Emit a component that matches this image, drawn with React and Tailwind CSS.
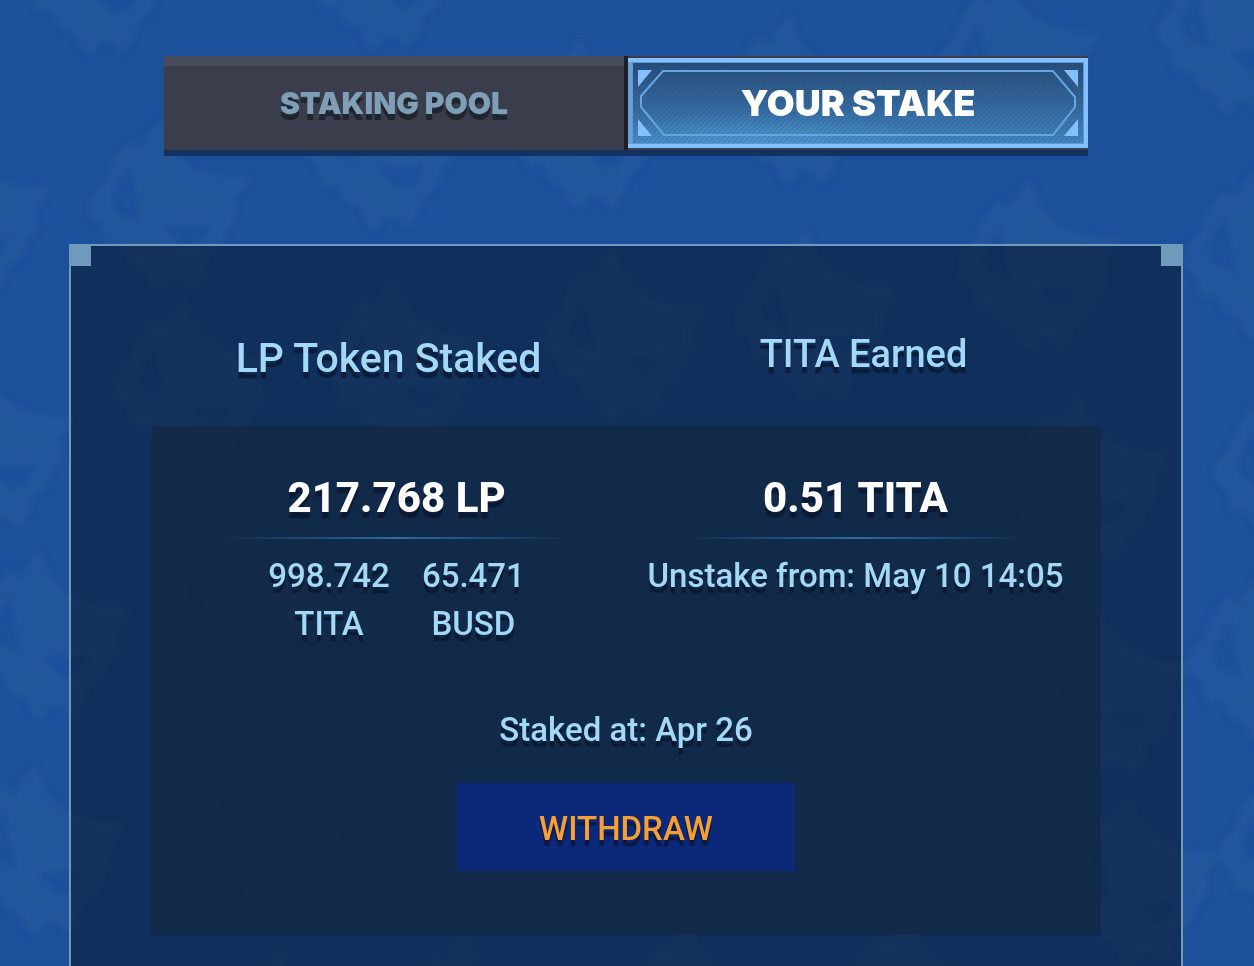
import { useState } from "react";

const TEXT_SHADOW = "[text-shadow:0_6px_1px_rgba(8,20,42,0.7)]";

// Centres of the mascot heads on the wallpaper
const heads = [
  [100, -30], [385, -35], [590, 125], [800, 100], [1020, 60], [1238, 30],
  [-30, 215], [170, 205], [385, 145], [1040, 265], [1265, 255],
  [195, 385], [405, 365], [625, 335], [817, 315], [1295, 470],
  [-5, 445], [50, 635], [240, 600], [1090, 480], [1270, 660],
  [45, 850], [270, 820], [1110, 690], [1140, 880], [1300, 850],
  [290, 1033], [475, 1020], [700, 1010], [920, 1000],
];

function Wallpaper() {
  return (
    <svg
      className="absolute inset-0 h-full w-full"
      viewBox="0 0 1254 966"
      preserveAspectRatio="xMidYMin slice"
      aria-hidden="true"
    >
      <defs>
        <g id="head">
          <path
            d="M-10 -86 L-2 -62 L10 -46 L30 -34 L56 -28 L80 -28 L74 -14 L66 -8 L66 16 L58 24 L52 42 L38 52 L34 68 L22 84 L12 72 L0 70 L-8 86 L-18 80 L-26 62 L-40 58 L-48 40 L-64 42 L-68 22 L-82 8 L-80 -6 L-66 -22 L-56 -46 L-40 -66 L-32 -54 L-22 -70 Z M-40 -42 L-58 -10 L-54 8 L-38 14 L-28 22 L-34 -8 Z M-8 22 L42 20 L28 42 L14 44 Z"
            fillRule="evenodd"
          />
        </g>
        <filter id="soft">
          <feGaussianBlur stdDeviation="3" />
        </filter>
      </defs>
      <g fill="#23579b" filter="url(#soft)">
        {heads.map(([x, y]) => (
          <use key={`${x}-${y}`} href="#head" x={x} y={y} />
        ))}
      </g>
    </svg>
  );
}

function TabFrame() {
  return (
    <svg
      className="absolute inset-0 h-full w-full"
      viewBox="0 0 460 90"
      preserveAspectRatio="none"
      aria-hidden="true"
    >
      <defs>
        <linearGradient id="tabFill" x1="0" y1="0" x2="0" y2="1">
          <stop offset="0" stopColor="#264a74" />
          <stop offset="0.5" stopColor="#33659a" />
          <stop offset="1" stopColor="#4589c4" />
        </linearGradient>
        <radialGradient id="tabGlow" cx="0.28" cy="1" r="0.4">
          <stop offset="0" stopColor="#55a8dc" stopOpacity="0.6" />
          <stop offset="1" stopColor="#55a8dc" stopOpacity="0" />
        </radialGradient>
        <pattern id="tabHatch" width="5" height="5" patternUnits="userSpaceOnUse">
          <path d="M0 5L5 0" stroke="#1c4674" strokeOpacity="0.3" />
        </pattern>
      </defs>
      <rect width="460" height="90" fill="url(#tabFill)" />
      <rect width="460" height="90" fill="url(#tabGlow)" />
      <rect width="460" height="90" fill="url(#tabHatch)" />
      <rect x="4" y="4" width="452" height="82" fill="none" stroke="#5f98d6" strokeWidth="2" />
      <rect x="2" y="2" width="456" height="86" fill="none" stroke="#84bfff" strokeWidth="4" />
      <path d="M2 86V4" stroke="#6b9fd4" strokeWidth="4" />
      <path
        d="M35 13H425L447 39V49L425 77H36L13 49V38Z"
        fill="none"
        stroke="#66a4e4"
        strokeWidth="2"
      />
      <path
        d="M10 12H24L10 29ZM10 61L24 78H10ZM450 12H436L450 29ZM450 61L436 78H450Z"
        fill="#84bfff"
      />
    </svg>
  );
}

function Tabs({ active, onChange }) {
  return (
    <div
      role="tablist"
      className="mx-auto grid h-[94px] w-full max-w-[924px] grid-cols-[464fr_460fr] bg-[#393d4c] font-['Inter',sans-serif] shadow-[0_6px_0_#14325f]"
    >
      <button
        type="button"
        role="tab"
        aria-selected={active === "pool"}
        onClick={() => onChange("pool")}
        className="border-r-4 border-[#1c1e2a] text-[30px] font-black text-[#7f9fb7] shadow-[inset_0_10px_0_#484c5a] [text-shadow:0_6px_0_#20242f]"
      >
        STAKING POOL
      </button>
      <button
        type="button"
        role="tab"
        aria-selected={active === "stake"}
        onClick={() => onChange("stake")}
        className="relative my-[2px] text-[36px] font-black text-white"
      >
        <TabFrame />
        <span className="relative">YOUR STAKE</span>
      </button>
    </div>
  );
}

function Divider() {
  return (
    <div className="mx-auto h-[2px] w-[344px] bg-linear-to-r from-transparent via-[#2f6aa8] to-transparent" />
  );
}

function TokenAmount({ amount, symbol }) {
  return (
    <div>
      <p>{amount}</p>
      <p>{symbol}</p>
    </div>
  );
}

export default function App() {
  const [tab, setTab] = useState("stake");

  return (
    <div className="relative flex min-h-screen flex-col overflow-hidden bg-[#1d509b] font-['Roboto',sans-serif]">
      <Wallpaper />

      <main className="relative flex flex-1 flex-col pt-14 pr-[2px]">
        <Tabs active={tab} onChange={setTab} />

        <section className="relative mx-[69px] mt-[94px] flex-1 border-2 border-b-0 border-[#6f9abb] bg-[#050e1d]/50 px-20 pb-[30px]">
          <span className="absolute top-0 left-0 size-5 bg-[#6f9abb]" />
          <span className="absolute top-0 right-0 size-5 bg-[#6f9abb]" />

          <div className={`grid h-[180px] grid-cols-2 pt-[84px] text-center font-medium text-[#a3d8f7] ${TEXT_SHADOW}`}>
            <h2 className="text-[41px] leading-[56px]">LP Token Staked</h2>
            <h2 className="text-[38px] leading-12">TITA Earned</h2>
          </div>

          <div className={`bg-[#142946]/80 px-4 pt-11 pb-16 text-center text-[33px] leading-12 font-medium text-[#a3d8f7] ${TEXT_SHADOW}`}>
            <div className="grid grid-cols-2">
              <div>
                <p className="pb-[11px] text-[42px] leading-14 font-extrabold text-white">217.768 LP</p>
                <Divider />
                <div className="flex justify-center gap-8 pt-[13px]">
                  <TokenAmount amount="998.742" symbol="TITA" />
                  <TokenAmount amount="65.471" symbol="BUSD" />
                </div>
              </div>
              <div>
                <p className="pb-[11px] text-[42px] leading-14 font-extrabold text-white">0.51 TITA</p>
                <Divider />
                <p className="pt-[13px] whitespace-nowrap">Unstake from: May 10 14:05</p>
              </div>
            </div>

            <p className="pt-[58px]">Staked at: Apr 26</p>
            <button
              type="button"
              className={`mt-[29px] h-[88px] w-[338px] bg-[#0b2879] pt-1 text-[#f79f35] ${TEXT_SHADOW}`}
            >
              WITHDRAW
            </button>
          </div>
        </section>
      </main>
    </div>
  );
}
